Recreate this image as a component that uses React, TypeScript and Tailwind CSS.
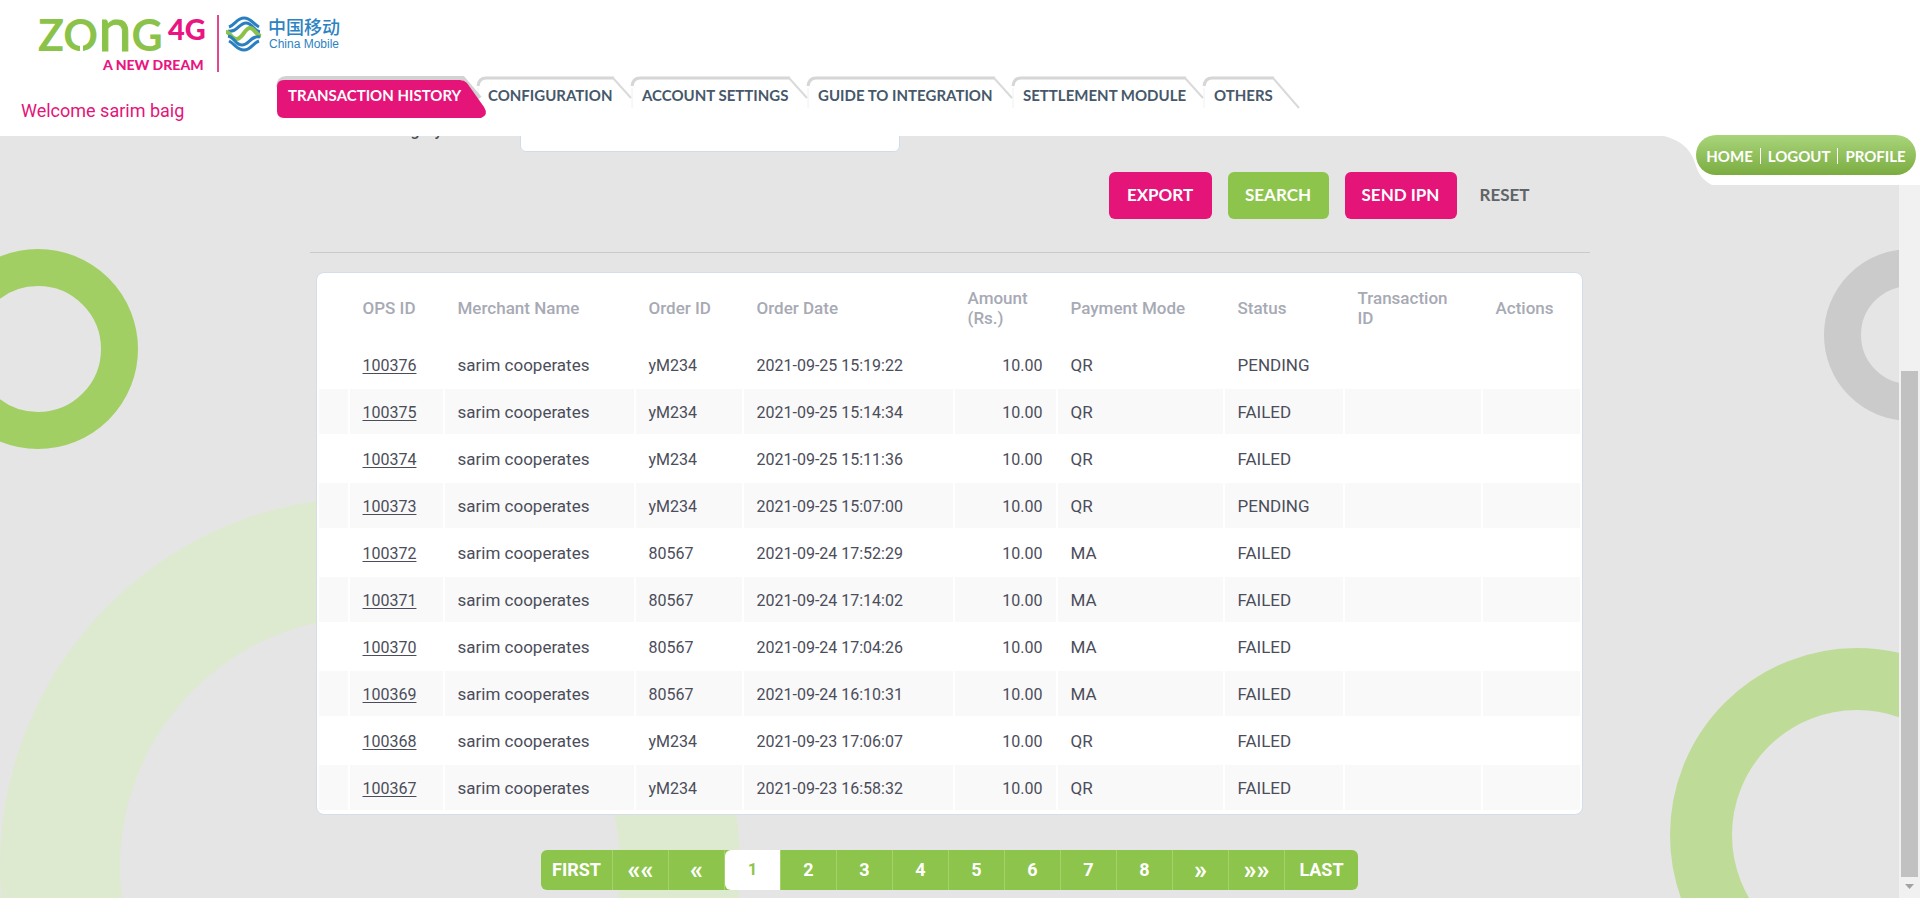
const tabs = [
  { label: "TRANSACTION HISTORY", width: 200, active: true },
  { label: "CONFIGURATION", width: 154 },
  { label: "ACCOUNT SETTINGS", width: 176 },
  { label: "GUIDE TO INTEGRATION", width: 205 },
  { label: "SETTLEMENT MODULE", width: 191 },
  { label: "OTHERS", width: 88 },
];

const columns = [
  { label: "", width: "w-[29px]" },
  { label: "OPS ID", width: "w-[93px]" },
  { label: "Merchant Name", width: "w-[189px]" },
  { label: "Order ID", width: "w-[106px]" },
  { label: "Order Date", width: "w-[209px]" },
  { label: "Amount (Rs.)", width: "w-[101px]" },
  { label: "Payment Mode", width: "w-[165px]" },
  { label: "Status", width: "w-[118px]" },
  { label: "Transaction ID", width: "w-[136px]" },
  { label: "Actions", width: "w-[97px]" },
];

const rows = [
  ["100376", "yM234", "2021-09-25 15:19:22", "QR", "PENDING"],
  ["100375", "yM234", "2021-09-25 15:14:34", "QR", "FAILED"],
  ["100374", "yM234", "2021-09-25 15:11:36", "QR", "FAILED"],
  ["100373", "yM234", "2021-09-25 15:07:00", "QR", "PENDING"],
  ["100372", "80567", "2021-09-24 17:52:29", "MA", "FAILED"],
  ["100371", "80567", "2021-09-24 17:14:02", "MA", "FAILED"],
  ["100370", "80567", "2021-09-24 17:04:26", "MA", "FAILED"],
  ["100369", "80567", "2021-09-24 16:10:31", "MA", "FAILED"],
  ["100368", "yM234", "2021-09-23 17:06:07", "QR", "FAILED"],
  ["100367", "yM234", "2021-09-23 16:58:32", "QR", "FAILED"],
];

const pages = ["««", "«", "1", "2", "3", "4", "5", "6", "7", "8", "»", "»»"];

function Logo() {
  return (
    <svg className="overflow-visible" width="320" height="64" viewBox="0 0 320 64" role="img" aria-label="Zong 4G, China Mobile">
      <text x="16" y="39" fill="#8bc34a" fontFamily="Lato, sans-serif" fontWeight="700" fontSize="43">
        ZO
        <tspan fontSize="60" fontWeight="400" stroke="#8bc34a" strokeWidth="1">n</tspan>
        G
      </text>
      <path d="M58 33h3v9h-3z" fill="#fff" />
      <g fill="#e91580" fontFamily="Lato, sans-serif" fontWeight="900">
        <text x="146" y="28" fontSize="29">4G</text>
        <text x="81" y="58" fontSize="14">A NEW DREAM</text>
      </g>
      <path d="M196 3v57" stroke="#e4478f" strokeWidth="2" />
      <ChinaMobileMark />
      <g fill="#2d83c2">
        <text x="246" y="22" fontSize="18" fontWeight="500" fontFamily="'Noto Sans CJK SC', sans-serif">中国移动</text>
        <text x="247" y="36" fontSize="12" fontFamily="'Liberation Sans', sans-serif">China Mobile</text>
      </g>
    </svg>
  );
}

function ChinaMobileMark() {
  return (
    <g transform="translate(204 4)" fill="none" strokeWidth="3">
      <path d="M3 11C9 9 11 2 18 2s9 6 15 9" stroke="#2a7fc1" />
      <path d="M2 15C11 17 13 7 20 7s7 8 14 9" stroke="#2a7fc1" />
      <path d="M0 16C5 16 5 24 11 23S19 12 24 12s5 7 11 8" stroke="#8bc34a" strokeWidth="4" />
      <path d="M34 21C25 19 23 29 16 29S9 21 2 20" stroke="#2a7fc1" />
      <path d="M33 25C27 27 25 34 18 34S9 28 3 25" stroke="#2a7fc1" />
    </g>
  );
}

function Tab({ label, width, active }: { label: string; width: number; active?: boolean }) {
  return (
    <li className={active ? "relative z-10 h-11" : "relative h-11"} style={{ width }}>
      <svg className="absolute left-0 top-0 overflow-visible" width={width} height="44" aria-hidden="true">
        {active ? (
          <>
            <path d={`M1 11Q2 2 9 2H${width - 14}L${width + 3} 22`} fill="none" stroke="#d2d2d2" strokeWidth="4" />
            <path
              d={`M7 4H${width - 17}Q${width - 13} 4 ${width - 10} 7L${width + 7} 31Q${width + 12} 39 ${width + 4} 42H7Q0 42 0 35V11Q0 4 7 4Z`}
              fill="#e41478"
            />
          </>
        ) : (
          <>
            <path d="M1 32V12" stroke="#f0f0f0" strokeWidth="1" />
            <path d={`M1 10Q2 2 9 2H${width - 17}`} fill="none" stroke="#d6d6d6" strokeWidth="3" />
            <path
              d={label === "OTHERS" ? `M${width - 18} 2L${width + 8} 32` : `M${width - 18} 2L${width} 22`}
              stroke="#dadada"
              strokeWidth="2"
            />
          </>
        )}
      </svg>
      <a
        href="#"
        className={
          active
            ? "relative flex h-[38px] items-center whitespace-nowrap pl-[11px] font-bold text-white"
            : "relative flex h-[38px] items-center whitespace-nowrap pl-[11px] font-bold text-[#46586a]"
        }
      >
        {label}
      </a>
    </li>
  );
}

function Rings() {
  return (
    <div aria-hidden="true" className="absolute inset-0 overflow-hidden">
      <svg className="absolute left-0 top-0" width="740" height="762" fill="none">
        <circle cx="38" cy="213" r="81.5" stroke="#a1cf63" strokeWidth="37" />
        <circle cx="370" cy="731" r="310" stroke="#ddead0" strokeWidth="120" />
      </svg>
      <svg className="absolute right-0 top-0" width="229" height="762" fill="none">
        <circle cx="240" cy="199" r="67.5" stroke="#cbcbcb" strokeWidth="37" />
        <circle cx="187" cy="699" r="156" stroke="#bedc98" strokeWidth="62" />
      </svg>
    </div>
  );
}

export default function App() {
  return (
    <div className="flex min-h-screen flex-col bg-white pb-px font-[Roboto,sans-serif] text-[#4b4d5a]">
      <header className="relative z-20 h-[136px] bg-white">
        <div className="pl-[22px] pt-3">
          <Logo />
        </div>
        <div className="flex">
          <p className="w-[277px] pl-[21px] pt-[21px] text-lg text-[#e41478]">Welcome sarim baig</p>
          <nav className="font-[Lato,sans-serif] text-[15px]">
            <ul className="flex">
              {tabs.map((t) => (
                <Tab key={t.label} {...t} />
              ))}
            </ul>
          </nav>
        </div>
        <div className="absolute right-0 top-[135px]">
          <svg className="absolute right-0 top-0" width="256" height="50" aria-hidden="true">
            <path d="M0 0H256V50H48C38 45 34 38 31 28C27 14 16 5 0 1Z" fill="#fff" />
          </svg>
          <nav className="relative mr-1 flex h-10 w-[220px] items-center justify-center gap-[7px] rounded-full bg-linear-to-b from-[#a9d57a] to-[#7bac40] pt-[2px] font-[Lato,sans-serif] text-[15px] font-bold text-white">
            <a href="#">HOME</a>
            <span className="h-4 w-px bg-white" />
            <a href="#">LOGOUT</a>
            <span className="h-4 w-px bg-white" />
            <a href="#">PROFILE</a>
          </nav>
        </div>
      </header>

      <div className="flex flex-1">
        <main className="relative min-w-0 flex-1 bg-[#e5e5e5]">
          <Rings />
          <div className="relative mx-auto w-[1280px]">
            <div className="flex h-4 items-end overflow-hidden">
              <label htmlFor="category" className="w-[210px] pb-[9px] pl-[68px] text-[16px] font-medium leading-6">
                Category
              </label>
              <input id="category" className="h-10 w-[380px] rounded-md border border-[#d0dde8] bg-white px-3" />
            </div>
            <div className="mt-5 flex justify-end gap-4 pr-[53px] font-[Lato,sans-serif] text-[17px] font-bold text-white">
              <button className="h-[47px] w-[103px] rounded-md bg-[#e41478] pb-[2px]">EXPORT</button>
              <button className="h-[47px] w-[101px] rounded-md bg-[#8dc44b] pb-[2px]">SEARCH</button>
              <button className="h-[47px] w-[112px] rounded-md bg-[#e41478] pb-[2px]">SEND IPN</button>
              <button className="h-[47px] w-16 pb-[2px] text-[#606468]">RESET</button>
            </div>
            <hr className="mt-[33px] border-[#c9cacb]" />
            <div className="ml-[6px] mt-[19px] w-[1267px] rounded-lg border border-[#d3dee8] bg-white pb-[2px]">
              <table className="w-full table-fixed border-separate border-spacing-[2px] text-left">
                <thead>
                  <tr className="h-[65px] text-[#a7aab4]">
                    {columns.map((c, i) => (
                      <th key={i} scope="col" className={`${c.width} pl-[13px] pr-4 text-[17px] font-medium leading-5`}>
                        {c.label}
                      </th>
                    ))}
                  </tr>
                </thead>
                <tbody>
                  {rows.map(([id, order, date, mode, status]) => (
                    <tr key={id} className="h-[45px] even:*:bg-[#f9f9f9] *:px-[13px] *:pt-[2px]">
                      <td />
                      <td>
                        <a href="#" className="underline underline-offset-2">{id}</a>
                      </td>
                      <td className="text-[17px]">sarim cooperates</td>
                      <td>{order}</td>
                      <td>{date}</td>
                      <td className="text-right">10.00</td>
                      <td className="text-[17px]">{mode}</td>
                      <td className="text-[17px]">{status}</td>
                      <td />
                      <td />
                    </tr>
                  ))}
                </tbody>
              </table>
            </div>
            <nav aria-label="Pages" className="mb-2 mt-[35px] flex justify-center">
              <div className="flex h-10 divide-x divide-[#a6d26c] overflow-hidden rounded-md bg-[#8dc44b] text-lg font-bold text-white">
                <button className="w-[72px]">FIRST</button>
                {pages.map((p) => (
                  <button
                    key={p}
                    className={
                      p === "1"
                        ? "w-14 rounded-l-md bg-white text-base text-[#8dc44b]"
                        : p > "9"
                          ? "w-14 pb-1 text-[26px]"
                          : "w-14"
                    }
                  >
                    {p}
                  </button>
                ))}
                <button className="w-[73px]">LAST</button>
              </div>
            </nav>
          </div>
        </main>
        <div aria-hidden="true" className="flex w-[21px] flex-col items-center bg-[#f1f1f1] pt-[235px]">
          <div className="w-[17px] flex-1 bg-[#c1c1c1]" />
          <svg width="21" height="21">
            <path d="M6 7h9l-4.500 5z" fill="#a3a3a3" />
          </svg>
        </div>
      </div>
    </div>
  );
}
